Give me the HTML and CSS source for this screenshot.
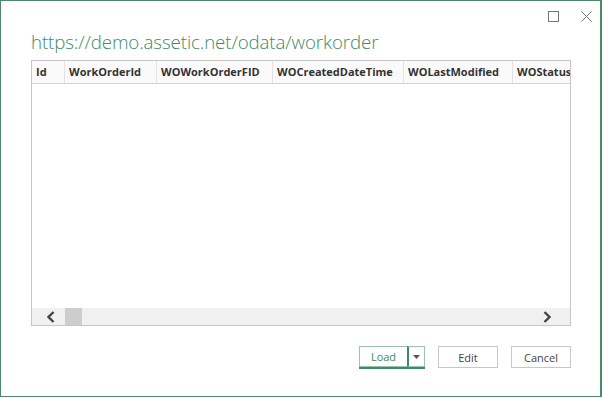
FILE: index.html
```html
<!DOCTYPE html>
<html lang="en">
<head>
    <meta charset="UTF-8">
    <title>Navigator</title>
    <link rel="stylesheet" href="styles.css">
</head>
<body>
    <div class="dialog">
        <div class="titlebar">
            <span class="tb-btn">
                <svg width="11" height="11" viewBox="0 0 11 11"><rect x="0.5" y="0.5" width="10" height="10" fill="none" stroke="#777" stroke-width="1"/></svg>
            </span>
            <span class="tb-btn">
                <svg width="11" height="11" viewBox="0 0 11 11"><path d="M0.5 0.5 L10.5 10.5 M10.5 0.5 L0.5 10.5" stroke="#777" stroke-width="1"/></svg>
            </span>
        </div>
        <h1 class="source">https://demo.assetic.net/odata/workorder</h1>
        <div class="grid">
            <div class="grid-head">
                <div class="col c-id">Id</div>
                <div class="col c-woid">WorkOrderId</div>
                <div class="col c-fid">WOWorkOrderFID</div>
                <div class="col c-created">WOCreatedDateTime</div>
                <div class="col c-mod">WOLastModified</div>
                <div class="col c-status">WOStatus</div>
            </div>
            <div class="grid-body"></div>
            <div class="hscroll">
                <span class="arrow left">
                    <svg width="10" height="12" viewBox="0 0 10 12"><path d="M7.5 1 L2.5 6 L7.5 11" fill="none" stroke="#444" stroke-width="2.4"/></svg>
                </span>
                <span class="thumb"></span>
                <span class="track"></span>
                <span class="arrow right">
                    <svg width="10" height="12" viewBox="0 0 10 12"><path d="M2.5 1 L7.5 6 L2.5 11" fill="none" stroke="#444" stroke-width="2.4"/></svg>
                </span>
            </div>
        </div>
        <div class="actions">
            <div class="split">
                <button class="btn load">Load</button>
                <button class="btn drop">
                    <svg width="7" height="4" viewBox="0 0 7 4"><path d="M0 0 H7 L3.5 4 Z" fill="#555"/></svg>
                </button>
            </div>
            <button class="btn">Edit</button>
            <button class="btn">Cancel</button>
        </div>
    </div>
</body>
</html>
```

FILE: styles.css
```css
html, body {
    margin: 0;
    padding: 0;
    background: #fff;
}
body {
    font-family: "Open Sans", "Liberation Sans", sans-serif;
    color: #333;
}
.dialog {
    width: 602px;
    height: 397px;
    box-sizing: border-box;
    border: 1px solid #4c8b68;
    border-right-width: 2px;
    padding: 0 0 0 30px;
}
.titlebar {
    display: flex;
    justify-content: flex-end;
    gap: 22px;
    padding: 10px 8px 0 0;
    height: 12px;
}
.tb-btn {
    display: flex;
    align-items: center;
    height: 11px;
}
.source {
    margin: 7px 0 0 0;
    font-weight: 300;
    font-size: 18.7px;
    line-height: 24px;
    color: #3f8a64;
    letter-spacing: -0.1px;
}
.grid {
    margin-top: 6px;
    width: 540px;
    height: 266px;
    box-sizing: border-box;
    border: 1px solid #c6c6c6;
    display: flex;
    flex-direction: column;
}
.grid-head {
    display: flex;
    height: 22px;
    border-bottom: 1px solid #d4d4d4;
    background: #fafafa;
}
.col {
    box-sizing: border-box;
    font-size: 11px;
    font-weight: 700;
    line-height: 22px;
    padding-left: 4px;
    border-right: 1px solid #e2e2e2;
    white-space: nowrap;
    overflow: hidden;
    color: #333;
}
.c-id { width: 33px; }
.c-woid { width: 92px; }
.c-fid { width: 116px; }
.c-created { width: 131px; }
.c-mod { width: 109px; }
.c-status { flex: 1; border-right: none; }
.grid-body {
    flex: 1;
    background: #fff;
}
.hscroll {
    display: flex;
    align-items: center;
    height: 17px;
    background: #f0f0f0;
}
.arrow {
    display: flex;
    align-items: center;
    box-sizing: border-box;
}
.arrow.left {
    width: 33px;
    padding-left: 14px;
}
.arrow.right {
    width: 34px;
    padding-left: 6px;
}
.thumb {
    width: 17px;
    height: 17px;
    background: #cdcdcd;
}
.track {
    flex: 1;
}
.actions {
    display: flex;
    gap: 13px;
    margin: 20px 0 0 328px;
}
.split {
    display: flex;
    border-bottom: 2px solid #3f8a64;
}
.btn {
    font-family: "Open Sans", "Liberation Sans", sans-serif;
    font-size: 11px;
    color: #444;
    background: #fff;
    border: 1px solid #c8c8c8;
    height: 22px;
    width: 60px;
    padding: 0;
}
.load {
    width: 48px;
    height: 21px;
    border-color: #9bc3ad;
    border-right: none;
    color: #3f8a64;
}
.drop {
    width: 18px;
    height: 21px;
    border: 1px solid #9bc3ad;
    border-left: 2px solid #3f8a64;
    display: flex;
    align-items: center;
    justify-content: center;
}
```
